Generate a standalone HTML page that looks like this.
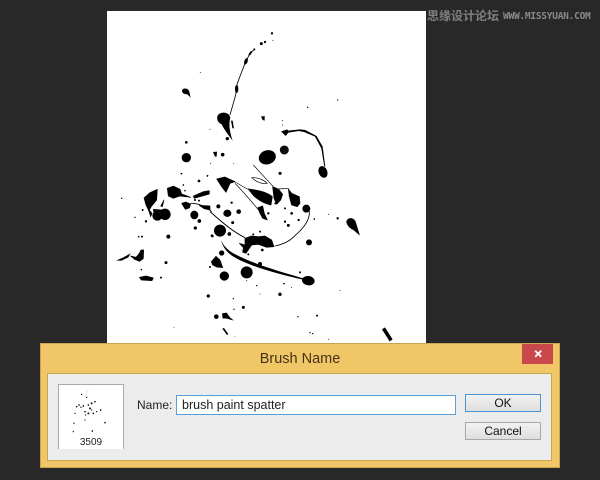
<!DOCTYPE html>
<html><head><meta charset="utf-8"><style>
html,body{margin:0;padding:0;background:#282828}
#p{position:relative;width:600px;height:480px;overflow:hidden;background:#282828;font-family:"Liberation Sans",sans-serif}
#p div{position:absolute;box-sizing:border-box}
</style></head><body><div id="p">
<div style="left:107px;top:11px;width:319px;height:333px;background:#fff"></div>
<svg width="600" height="480" style="position:absolute;left:0;top:0" fill="#000">
<defs><filter id="b" x="-5%" y="-5%" width="110%" height="110%"><feGaussianBlur stdDeviation=".3"/></filter></defs>
<g filter="url(#b)">
<g transform="translate(100,0) scale(.3333)" stroke-linejoin="round">
<path d="M352,350C355,335 385,332 391,352C388,365 385,385 398,422C385,405 372,388 365,373C355,368 350,360 352,350Z"/>
<path d="M390,345L407,285L412,250L435,190L450,160L465,147" fill="none" stroke="#000" stroke-width="2.5"/>
<ellipse cx="410" cy="267" rx="5" ry="12"/><ellipse cx="438" cy="184" rx="5" ry="10" transform="rotate(20 438 184)"/><ellipse cx="451" cy="160" rx="3" ry="8" transform="rotate(35 451 160)"/>
<circle cx="516" cy="100" r="3.5"/><circle cx="484" cy="131" r="4.5"/><circle cx="495" cy="126" r="3.5"/><circle cx="463" cy="148" r="3"/><circle cx="519" cy="121" r="1.5"/><circle cx="301" cy="217" r="1.5"/><circle cx="713" cy="300" r="2"/>
<path d="M246,272C248,263 265,263 268,275L272,293L262,283C252,283 246,279 246,272Z"/>
<path d="M483,350L494,348L494,362L488,360Z"/><path d="M393,362L398,362L402,386L397,384Z"/>
<circle cx="382" cy="416" r="5"/><circle cx="259" cy="427" r="4"/><circle cx="259" cy="473" r="14"/><path d="M339,456L351,455L350,470L345,470Z"/><circle cx="368" cy="464" r="5.5"/><circle cx="330" cy="388" r="1.5"/><circle cx="548" cy="362" r="1.5"/><circle cx="548" cy="375" r="1.5"/><circle cx="623" cy="322" r="2"/>
<ellipse cx="502" cy="472" rx="26" ry="21" transform="rotate(-18 502 472)"/><circle cx="553" cy="450" r="13.5" fill="#111"/>
<path d="M543,394L562,388L564,392L600,388L616,390L650,408L668,440L676,500L673,500L664,445L645,410L612,396L596,393L565,398L557,408Z"/>
<ellipse cx="669" cy="516" rx="13" ry="18" transform="rotate(-22 669 516)"/>
<circle cx="541" cy="520" r="4"/><circle cx="332" cy="490" r="1.5"/><circle cx="245" cy="521" r="2"/><circle cx="323" cy="527" r="2"/><circle cx="400" cy="490" r="1.2"/>
</g>
<g transform="translate(210,165) scale(.3333)" stroke="#000" stroke-width="2" stroke-linejoin="round">
<path d="M20,42L45,36L75,50L60,55L48,82L35,65Z"/>
<path d="M70,48C90,58 100,68 118,74M75,55C100,80 125,110 150,140M130,0L190,65M205,72L236,70" fill="none" stroke-width="2"/>
<path d="M115,72C140,75 170,80 187,95L183,120C160,115 135,100 125,85Z"/>
<path d="M143,128L158,123L163,145L172,165L158,160L150,145Z"/>
<path d="M125,38C140,36 160,44 172,55C155,58 138,50 125,38Z" fill="none" stroke-width="2"/>
<path d="M188,65L205,72L218,88L212,105L200,118L192,100Z"/>
<path d="M235,72L245,85L268,95L270,115L262,125L245,120L238,95Z"/>
<circle cx="289" cy="131" r="11"/>
<path d="M298,138C302,170 270,200 240,225C225,235 210,240 195,243" fill="none" stroke-width="2.5"/>
<path d="M105,220L125,213L145,215L165,213L185,225L192,245L170,247L145,238L125,240L108,265L98,262L100,248L88,235L105,240Z"/>
<path d="M0,140C30,165 60,195 105,218" fill="none" stroke-width="3"/>
<path d="M33,225C42,245 55,258 80,270C130,296 210,320 280,340L279,344C200,326 120,304 72,276C50,263 38,245 33,225Z" stroke-width="0"/>
<ellipse cx="295" cy="347" rx="18" ry="13" transform="rotate(8 295 347)"/><circle cx="150" cy="297" r="5"/>
<circle cx="30" cy="197" r="17"/><ellipse cx="52" cy="145" rx="11" ry="10"/><circle cx="86" cy="140" r="6"/><circle cx="25" cy="124" r="5"/><circle cx="65" cy="113" r="2.5"/><circle cx="68" cy="173" r="3.5"/><circle cx="6" cy="212" r="3"/><circle cx="58" cy="207" r="4.5"/><circle cx="35" cy="264" r="7"/>
<path d="M4,290L18,274L30,285L38,308L20,306L8,300Z"/><circle cx="43" cy="333" r="13"/><circle cx="110" cy="322" r="17"/><circle cx="297" cy="232" r="8"/><circle cx="210" cy="25" r="3.5"/>
<circle cx="235" cy="181" r="3.5"/><circle cx="225" cy="170" r="2.5"/><circle cx="245" cy="145" r="3"/><circle cx="266" cy="165" r="2.5"/><circle cx="225" cy="130" r="2"/><circle cx="175" cy="145" r="2.5"/><circle cx="157" cy="255" r="3"/><circle cx="130" cy="208" r="2"/><circle cx="150" cy="200" r="2"/><circle cx="115" cy="268" r="2"/><circle cx="270" cy="322" r="2"/><circle cx="196" cy="115" r="2"/><circle cx="313" cy="162" r="1.5"/>
</g>
<g transform="translate(130,170) scale(.3333)" stroke="#000" stroke-width="2" stroke-linejoin="round">
<path d="M42,84L60,68L82,58L80,90L65,108L58,120L66,130L62,140L56,122L48,105Z"/>
<circle cx="82" cy="137" r="14"/><circle cx="105" cy="133" r="16"/><path d="M70,118L95,120L90,130L72,130Z"/>
<path d="M92,108L102,90L97,110Z"/>
<path d="M112,55L130,48L150,58L155,72L182,82L150,78L130,85L115,78Z"/>
<path d="M190,78L220,65L238,62L238,72L210,80L193,85Z"/>
<path d="M155,100L168,96L182,102L178,114L166,118Z"/>
<path d="M182,100C205,100 225,108 245,125" fill="none" stroke-width="2.5"/><path d="M208,106L240,108L240,120L222,116Z"/>
<ellipse cx="193" cy="135" rx="11" ry="12"/><circle cx="208" cy="153" r="4.5"/><circle cx="196" cy="174" r="4"/><circle cx="115" cy="200" r="5"/><circle cx="108" cy="278" r="3.5"/><circle cx="48" cy="154" r="2.5"/><circle cx="36" cy="200" r="2"/><circle cx="26" cy="200" r="1.5"/><circle cx="154" cy="11" r="1.5"/><circle cx="207" cy="33" r="3"/><circle cx="232" cy="18" r="1.5"/><circle cx="247" cy="198" r="3"/><circle cx="15" cy="142" r="1"/><circle cx="38" cy="120" r="2"/><circle cx="195" cy="90" r="2"/><circle cx="207" cy="92" r="2"/><circle cx="165" cy="62" r="1.5"/><circle cx="160" cy="45" r="1.5"/>
<path d="M2,258L18,262L28,250L33,240L41,240L40,266L28,274L14,268Z"/>
<path d="M28,322L48,318L70,324L66,332L34,330Z"/><circle cx="93" cy="323" r="2"/><circle cx="34" cy="299" r="1.5"/><circle cx="240" cy="291" r="2"/>
</g>
<g transform="translate(100,170) scale(.3333)">
<path d="M48,272L70,262L92,250L85,262L65,272Z"/><circle cx="65" cy="85" r="2"/>
<path d="M739,155C742,142 760,140 767,155L780,197L760,180C748,175 740,165 739,155Z"/>
<circle cx="540" cy="373" r="5"/><circle cx="430" cy="412" r="4.5"/><circle cx="325" cy="378" r="5"/><circle cx="349" cy="440" r="7"/>
<path d="M366,430L380,428L390,442L402,452L380,446L368,445Z"/><path d="M367,476L372,474L385,492L381,495Z"/><path d="M846,478L855,472L878,508L869,514Z"/>
<circle cx="651" cy="437" r="3"/><circle cx="713" cy="145" r="3.5"/><circle cx="594" cy="440" r="2"/><circle cx="600" cy="306" r="2"/><circle cx="630" cy="488" r="2"/><circle cx="638" cy="491" r="2"/><circle cx="686" cy="508" r="1.5"/><circle cx="720" cy="361" r="1.5"/><circle cx="686" cy="133" r="1.5"/><circle cx="470" cy="347" r="2"/><circle cx="552" cy="341" r="2.5"/><circle cx="400" cy="386" r="2"/><circle cx="402" cy="418" r="2"/><circle cx="480" cy="372" r="1.5"/><circle cx="575" cy="352" r="1.5"/><circle cx="440" cy="332" r="1.5"/><circle cx="222" cy="472" r="1.2"/><circle cx="405" cy="500" r="1.2"/>
</g>
</g>
</svg>
<div style="left:427px;top:8px;font:bold 12px/15px 'Noto Sans CJK SC',sans-serif;color:#808080;white-space:nowrap;width:72px">思缘设计论坛</div>
<div style="left:503px;top:11px;font:bold 9.5px/12px 'DejaVu Sans Mono',monospace;color:#8a8a8a;white-space:nowrap;letter-spacing:-.25px;width:92px">WWW.MISSYUAN.COM</div>
<div style="left:40px;top:343px;width:520px;height:125px;background:#f0c666;border:1px solid #c9a550"></div>
<div style="left:522px;top:344px;width:31px;height:20px;background:#c9484c"></div>
<svg width="31" height="20" style="position:absolute;left:522px;top:344px"><path d="M13.2,6.8L19.2,12.8M19.2,6.8L13.2,12.8" stroke="#fff" stroke-width="1.8" fill="none"/></svg>
<div style="left:40px;top:351px;width:520px;text-align:center;font-size:14.5px;line-height:16px;color:#43341a">Brush Name</div>
<div style="left:47px;top:373px;width:505px;height:88px;background:#ececec;border:1px solid #c9a550"></div>
<div style="left:58px;top:384px;width:66px;height:65px;background:#fff;border:1px solid #aaa;border-bottom:0"></div>
<svg width="600" height="480" style="position:absolute;left:0;top:0" fill="#111"><g transform="translate(55,380) scale(.3333)">
<circle cx="80" cy="43" r="2"/><circle cx="95" cy="52" r="2"/><circle cx="72" cy="75" r="2.5"/><circle cx="65" cy="80" r="2.5"/><circle cx="78" cy="82" r="2"/><circle cx="85" cy="78" r="2.5"/><circle cx="100" cy="75" r="2.5"/><circle cx="110" cy="70" r="3"/><circle cx="120" cy="65" r="2.5"/><circle cx="105" cy="85" r="3"/><circle cx="90" cy="95" r="2.5"/><circle cx="100" cy="100" r="3"/><circle cx="115" cy="100" r="2.5"/><circle cx="60" cy="100" r="2"/><circle cx="125" cy="95" r="2"/><circle cx="137" cy="90" r="2.5"/><circle cx="150" cy="128" r="2.5"/><circle cx="112" cy="153" r="2.5"/><circle cx="57" cy="130" r="2"/><circle cx="55" cy="155" r="2"/><circle cx="90" cy="120" r="2"/><circle cx="92" cy="105" r="2"/><circle cx="110" cy="90" r="2"/><path d="M100,30L90,50" stroke="#bbb" fill="none"/></g></svg>
<div style="left:58px;top:437px;width:66px;text-align:center;font-size:10px;line-height:12px;color:#222">3509</div>
<div style="left:137px;top:398px;font-size:12px;line-height:14px;color:#222;width:40px;white-space:nowrap">Name:</div>
<div style="left:176px;top:395px;width:280px;height:20px;background:#fff;border:1px solid #5a9fd8;padding-left:5px;font-size:12.5px;line-height:18px;color:#222">brush paint spatter</div>
<div style="left:465px;top:394px;width:76px;height:18px;background:linear-gradient(#f2f2f2,#dedede);border:1px solid #4a94d6;text-align:center;font-size:12px;line-height:16px;color:#111">OK</div>
<div style="left:465px;top:422px;width:76px;height:18px;background:linear-gradient(#f2f2f2,#dedede);border:1px solid #a8a8a8;text-align:center;font-size:12px;line-height:16px;color:#111">Cancel</div>
</div></body></html>
